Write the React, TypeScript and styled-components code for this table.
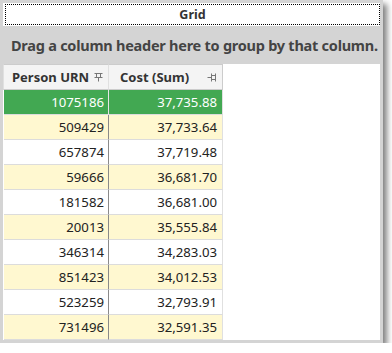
import React from "react";
import styled, { createGlobalStyle } from "styled-components";

const Global = createGlobalStyle`
  body {
    margin: 0;
    background: #ffffff;
    font-family: "Noto Sans", "Open Sans", sans-serif;
  }
`;

const Frame = styled.div`
  width: 383px;
  height: 343px;
  box-sizing: border-box;
  padding: 3px;
  background: #d4d4d4;
  display: flex;
  flex-direction: column;
  box-shadow: 4px 4px 6px rgba(0, 0, 0, 0.5);
`;

const TabBar = styled.div`
  height: 23px;
  background: #ffffff;
  padding: 1px 0 1px 2px;
  box-sizing: border-box;
  display: flex;
`;

const TabFocus = styled.div`
  flex: 1;
  border: 1px dotted #000000;
  display: flex;
  align-items: center;
  justify-content: center;
  font-size: 12.5px;
  font-weight: 700;
  color: #333333;
`;

const GroupPanel = styled.div`
  height: 38px;
  padding: 0 0 0 8px;
  display: flex;
  align-items: center;
  font-size: 14.5px;
  font-weight: 700;
  color: #444444;
  letter-spacing: -0.25px;
  white-space: nowrap;
`;

const GridArea = styled.div`
  flex: 1;
  background: #ffffff;
  padding: 0 0 0 1px;
  display: flex;
  align-items: flex-start;
`;

const Table = styled.div`
  width: 219px;
  display: flex;
  flex-direction: column;
`;

const Row = styled.div<{ $bg: string; $fg: string; $h: number }>`
  display: grid;
  grid-template-columns: 105px 114px;
  height: ${(p) => p.$h}px;
  background: ${(p) => p.$bg};
  color: ${(p) => p.$fg};
`;

const HeadCell = styled.div<{ $pad: number }>`
  display: flex;
  align-items: center;
  justify-content: space-between;
  padding: 0 5px 0 ${(p) => p.$pad}px;
  background: #f4f4f4;
  border: 1px solid #cccccc;
  border-left-color: #e0e0e0;
  margin-left: -1px;
  font-size: 13px;
  font-weight: 700;
  color: #333333;
`;

const Cell = styled.div<{ $divider: string; $pad: number }>`
  display: flex;
  align-items: center;
  justify-content: flex-end;
  padding: 0 ${(p) => p.$pad}px 0 0;
  border-bottom: 1px solid #dcdcdc;
  border-right: 1px solid ${(p) => p.$divider};
  font-size: 13.2px;
`;

const PinDown = () => (
  <svg width="9" height="10" viewBox="0 0 9 10">
    <path d="M0.5 1.5h8M2.5 1.5v4M6.5 1.5v4M0.5 5.5h8M4.5 5.5v4" stroke="#777" fill="none" />
  </svg>
);

const PinSide = () => (
  <svg width="10" height="9" viewBox="0 0 10 9">
    <path d="M8.5 0.5v8M8.5 2.5h-4M8.5 6.5h-4M4.5 0.5v8M4.5 4.5h-4" stroke="#777" fill="none" />
  </svg>
);

const rows = [
  ["1075186", "37,735.88"],
  ["509429", "37,733.64"],
  ["657874", "37,719.48"],
  ["59666", "36,681.70"],
  ["181582", "36,681.00"],
  ["20013", "35,555.84"],
  ["346314", "34,283.03"],
  ["851423", "34,012.53"],
  ["523259", "32,793.91"],
  ["731496", "32,591.35"],
];

export default function App() {
  return (
    <>
      <Global />
      <Frame>
        <TabBar>
          <TabFocus>Grid</TabFocus>
        </TabBar>
        <GroupPanel>Drag a column header here to group by that column.</GroupPanel>
        <GridArea>
          <Table>
            <Row $bg="#f4f4f4" $fg="#333" $h={26}>
              <HeadCell $pad={8}>
                Person URN <PinDown />
              </HeadCell>
              <HeadCell $pad={11}>
                Cost (Sum) <PinSide />
              </HeadCell>
            </Row>
            {rows.map(([urn, cost], i) => {
              const selected = i === 0;
              const bg = selected ? "#42a852" : i % 2 === 1 ? "#fff8d0" : "#ffffff";
              return (
                <Row key={urn} $bg={bg} $fg={selected ? "#ffffff" : "#222222"} $h={25}>
                  <Cell $pad={4} $divider={selected ? "#e6e6e6" : "#8a8a8a"}>{urn}</Cell>
                  <Cell $pad={5} $divider="#e0e0e0">{cost}</Cell>
                </Row>
              );
            })}
          </Table>
        </GridArea>
      </Frame>
    </>
  );
}
